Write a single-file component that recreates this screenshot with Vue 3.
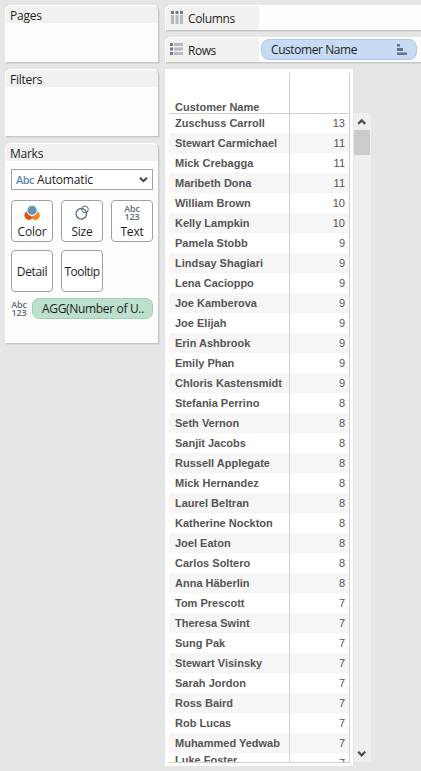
<script setup>
const rows = [
  ['Zuschuss Carroll', 13], ['Stewart Carmichael', 11], ['Mick Crebagga', 11], ['Maribeth Dona', 11],
  ['William Brown', 10], ['Kelly Lampkin', 10], ['Pamela Stobb', 9], ['Lindsay Shagiari', 9],
  ['Lena Cacioppo', 9], ['Joe Kamberova', 9], ['Joe Elijah', 9], ['Erin Ashbrook', 9],
  ['Emily Phan', 9], ['Chloris Kastensmidt', 9], ['Stefania Perrino', 8], ['Seth Vernon', 8],
  ['Sanjit Jacobs', 8], ['Russell Applegate', 8], ['Mick Hernandez', 8], ['Laurel Beltran', 8],
  ['Katherine Nockton', 8], ['Joel Eaton', 8], ['Carlos Soltero', 8], ['Anna Häberlin', 8],
  ['Tom Prescott', 7], ['Theresa Swint', 7], ['Sung Pak', 7], ['Stewart Visinsky', 7],
  ['Sarah Jordon', 7], ['Ross Baird', 7], ['Rob Lucas', 7], ['Muhammed Yedwab', 7],
  ['Luke Foster', 7],
]
</script>

<template>
  <div class="app">
    <aside class="side">
      <section class="card pages"><h2>Pages</h2></section>
      <section class="card filters"><h2>Filters</h2></section>
      <section class="card marks">
        <h2>Marks</h2>
        <div class="marks-body">
          <div class="select">
            <span class="abc">Abc</span><span class="auto">Automatic</span>
            <svg width="9" height="7" viewBox="0 0 9 7"><path d="M1 1.7 4.5 5.2 8 1.7" fill="none" stroke="#444" stroke-width="2" /></svg>
          </div>
          <div class="buttons">
            <div class="btn">
              <svg width="16" height="16" viewBox="0 0 16 16">
                <circle cx="4.9" cy="10.4" r="4.5" fill="#d4570f" />
                <circle cx="11.3" cy="10.4" r="4.5" fill="#f57f26" />
                <circle cx="8.1" cy="5.3" r="5.6" fill="#fff" />
                <circle cx="8.1" cy="5.3" r="4.6" fill="#6694b5" />
              </svg>
              <span>Color</span>
            </div>
            <div class="btn">
              <svg width="16" height="16" viewBox="0 0 16 16" fill="none" stroke="#5b6b80">
                <circle cx="7.3" cy="8.8" r="5.3" stroke-width="1.3" />
                <circle cx="11" cy="4.4" r="3.3" />
              </svg>
              <span>Size</span>
            </div>
            <div class="btn">
              <div class="glyph"><i>Abc</i><i>123</i></div>
              <span>Text</span>
            </div>
            <div class="btn plain"><span class="detail">Detail</span></div>
            <div class="btn plain"><span class="tooltip">Tooltip</span></div>
          </div>
          <div class="mark-row">
            <div class="glyph"><i>Abc</i><i>123</i></div>
            <div class="pill green"><span>AGG(Number of U..</span></div>
          </div>
        </div>
      </section>
    </aside>

    <main class="main">
      <div class="shelf">
        <div class="shelf-label">
          <svg width="12" height="13" viewBox="0 0 12 13">
            <path d="M0 0h3v3H0zM4.5 0h3v3h-3zM9 0h3v3H9z" fill="#6c7a8b" />
            <path d="M0 4h3v9H0zM4.5 4h3v9h-3zM9 4h3v9H9z" fill="#b3bac2" />
          </svg>
          <span class="columns">Columns</span>
        </div>
      </div>
      <div class="shelf">
        <div class="shelf-label">
          <svg class="rows-icon" width="13" height="12" viewBox="0 0 13 12">
            <path d="M0 0h3v3H0zM0 4.5h3v3H0zM0 9h3v3H0z" fill="#6c7a8b" />
            <path d="M4 0h9v3H4zM4 4.5h9v3H4zM4 9h9v3H4z" fill="#b3bac2" />
          </svg>
          <span class="rows-label">Rows</span>
        </div>
        <div class="pill blue">
          <span>Customer Name</span>
          <svg width="10" height="11" viewBox="0 0 10 11"><path d="M0 0h3v2.5H0zM0 4h6v3H0zM0 8.5h10V11H0z" fill="#64748b" /></svg>
        </div>
      </div>

      <div class="view">
        <div class="sheet">
          <div class="table">
            <div class="thead"><div class="name">Customer Name</div><div class="val"></div></div>
            <div class="tbody">
              <div v-for="(r, i) in rows" :key="r[0]" class="tr" :class="{ band: i % 2 }">
                <div class="name">{{ r[0] }}</div>
                <div class="val">{{ r[1] }}</div>
              </div>
            </div>
          </div>
        </div>
        <div class="scroll">
          <svg width="17" height="17" viewBox="0 0 17 17"><path d="M4.2 10.9 7.7 7.4l3.5 3.5" fill="none" stroke="#505050" stroke-width="2.3" /></svg>
          <div class="thumb"></div>
          <svg class="down" width="17" height="17" viewBox="0 0 17 17"><path d="M4.2 6.8 7.7 10.3l3.5-3.5" fill="none" stroke="#505050" stroke-width="2.3" /></svg>
        </div>
      </div>
    </main>
  </div>
</template>

<style>
body { background: #e6e6e6; overflow: hidden; }
</style>

<style scoped>
* { box-sizing: border-box; }
.app {
  display: flex; gap: 6px; width: 421px; height: 771px; padding: 5px 0 0 5px;
  background: #e6e6e6; overflow: hidden; color: #1e1e1e;
  font: 12px/18px "Open Sans", "Noto Sans", sans-serif;
}
span, h2 { white-space: nowrap; }
.side { width: 154px; flex: none; display: flex; flex-direction: column; gap: 6px; }
.card {
  background: #fdfdfd; border: 1px solid #fff; border-right-color: #c8c8c8; border-bottom-color: #c4c6c6;
  border-radius: 6px 6px 0 0; box-shadow: 1px 1px 0 #d8d8d8;
}
.card h2 {
  margin: 0; height: 17px; padding-left: 4px; font-size: 12px; font-weight: 400; line-height: 19px;
  background: #f1f1ef; border-radius: 5px 5px 0 0; letter-spacing: -0.25px;
}
.pages { height: 58px; }
.filters { height: 68px; }
.marks { height: 201px; }
.marks-body { padding: 8px 5px 0; }
.select {
  display: flex; align-items: center; width: 142px; height: 21px; padding: 0 4px;
  border: 1px solid #a3a3a3; background: #fff;
}
.abc { width: 21px; font-size: 11px; font-weight: 600; color: #5b8cab; letter-spacing: -0.5px; }
.auto { flex: 1; letter-spacing: -0.15px; }
.buttons { display: grid; grid-template-columns: repeat(3, 42px); gap: 8px; margin-top: 10px; }
.btn {
  height: 42px; display: flex; flex-direction: column; align-items: center; padding-top: 4px;
  border: 1px solid #a0a0a0; border-radius: 4px; background: #fff;
}
.btn > svg { flex: none; }
.btn > span { margin-top: 2px; letter-spacing: -0.2px; }
.btn.plain { padding-top: 10px; }
.btn > .detail { letter-spacing: -0.35px; }
.btn > .tooltip { letter-spacing: -0.5px; }
.glyph { width: 16px; height: 16px; color: #5b6b80; font-size: 9px; font-weight: 600; line-height: 8px; text-align: center; letter-spacing: -0.2px; }
.glyph i { display: block; font-style: normal; }
.mark-row { display: flex; align-items: center; gap: 5px; margin-top: 6px; }
.pill { display: flex; align-items: center; height: 21px; border-radius: 7px; }
.green { width: 121px; padding-left: 9px; background: #bce0cb; border: 1px solid #a5ceb6; letter-spacing: -0.33px; }
.main { flex: 1; min-width: 0; }
.shelf {
  display: flex; height: 26px; margin-bottom: 6px; background: #fdfdfd; border: 1px solid #fff; border-right: 0;
  border-bottom-color: #c4c6c6; border-radius: 6px 0 0 0; box-shadow: 1px 1px 0 #d8d8d8;
}
.shelf-label { width: 93px; flex: none; display: flex; align-items: center; padding: 2px 0 0 5px; background: #f1f1ef; border-radius: 5px 0 0 0; }
.columns { margin-left: 5px; letter-spacing: -0.35px; }
.rows-icon { margin-left: -1px; }
.rows-label { margin-left: 5px; letter-spacing: -0.5px; }
.shelf-label svg { margin-top: -4px; }
.blue { width: 156px; margin: 1px 0 0 2px; padding: 0 9px; justify-content: space-between; background: #c8dbf5; border: 1px solid #adc8ea; border-radius: 8px; letter-spacing: -0.43px; }
.view { display: flex; }
.sheet { width: 188px; height: 697px; padding: 4px 3px 3px 4px; background: #fff; }
.table { width: 181px; height: 690px; border-right: 1px solid #d0d0d0; border-bottom: 1px solid #d0d0d0; color: #555; font: 11px/20px "Liberation Sans", Arial, sans-serif; }
.thead { display: flex; height: 41px; border-bottom: 1px solid #d0d0d0; font-weight: 700; }
.thead .name { padding-top: 24px; }
.tbody { height: 648px; overflow: hidden; }
.tr { display: flex; height: 20px; }
.tr:first-child { height: 19px; line-height: 19px; }
.tr:last-child .name { line-height: 15px; }
.band { background: #f6f6f6; }
.name { width: 121px; padding-left: 6px; border-right: 1px solid #d0d0d0; font-weight: 700; white-space: nowrap; }
.val { flex: 1; padding-right: 4px; text-align: right; }
.scroll { display: flex; flex-direction: column; width: 17px; height: 649px; margin: 44px 0 0 1px; background: #efefef; }
.thumb { width: 16px; height: 25px; background: #cbcbcb; }
.down { margin-top: auto; }
</style>
